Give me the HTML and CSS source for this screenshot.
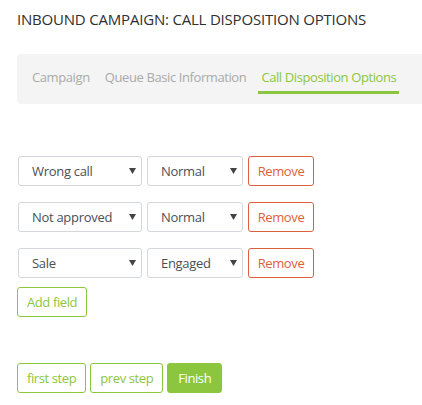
FILE: index.html
```html
<!DOCTYPE html>
<html>
<head>
<meta charset="utf-8">
<link rel="stylesheet" href="styles.css">
</head>
<body>
<div class="page">
  <h1 class="title">INBOUND CAMPAIGN: CALL DISPOSITION OPTIONS</h1>
  <div class="tabs">
    <a class="tab">Campaign</a>
    <a class="tab">Queue Basic Information</a>
    <a class="tab active">Call Disposition Options</a>
  </div>
  <div class="fields">
    <div class="row">
      <div class="select sel-a"><span>Wrong call</span><svg class="caret" width="7" height="6" viewBox="0 0 7 6"><path d="M0 0H7L3.5 6Z"/></svg></div>
      <div class="select sel-b"><span>Normal</span><svg class="caret" width="7" height="6" viewBox="0 0 7 6"><path d="M0 0H7L3.5 6Z"/></svg></div>
      <button class="btn btn-danger">Remove</button>
    </div>
    <div class="row">
      <div class="select sel-a"><span>Not approved</span><svg class="caret" width="7" height="6" viewBox="0 0 7 6"><path d="M0 0H7L3.5 6Z"/></svg></div>
      <div class="select sel-b"><span>Normal</span><svg class="caret" width="7" height="6" viewBox="0 0 7 6"><path d="M0 0H7L3.5 6Z"/></svg></div>
      <button class="btn btn-danger">Remove</button>
    </div>
    <div class="row">
      <div class="select sel-a"><span>Sale</span><svg class="caret" width="7" height="6" viewBox="0 0 7 6"><path d="M0 0H7L3.5 6Z"/></svg></div>
      <div class="select sel-b"><span>Engaged</span><svg class="caret" width="7" height="6" viewBox="0 0 7 6"><path d="M0 0H7L3.5 6Z"/></svg></div>
      <button class="btn btn-danger">Remove</button>
    </div>
    <div class="add-row">
      <button class="btn btn-outline">Add field</button>
    </div>
  </div>
  <div class="steps">
    <button class="btn btn-outline">first step</button>
    <button class="btn btn-outline">prev step</button>
    <button class="btn btn-primary">Finish</button>
  </div>
</div>
</body>
</html>
```
FILE: styles.css
```css
* { box-sizing: border-box; }
html, body { margin: 0; padding: 0; background: #fff; }
body {
  font-family: "Open Sans", "Noto Sans", sans-serif;
  color: #444;
  overflow: hidden;
}
.page {
  padding: 8px 0 0 17px;
  width: 430px;
}
.title {
  margin: 0;
  font-size: 15px;
  font-weight: 400;
  color: #2f2f2f;
  line-height: 22px;
  letter-spacing: -0.2px;
}
.tabs {
  margin-top: 24px;
  height: 50px;
  background: #f4f4f4;
  border-radius: 4px 0 0 4px;
  display: flex;
  align-items: flex-start;
  padding-left: 12px;
  gap: 9px;
}
.tab {
  font-size: 13px;
  color: #aaa;
  padding: 8px 3px 0;
  display: flex;
  align-items: center;
  height: 40px;
  letter-spacing: -0.4px;
  border-bottom: 3px solid transparent;
}
.tab.active {
  color: #8cc63e;
  border-bottom-color: #8cc63e;
}
.fields {
  margin-top: 52px;
  display: flex;
  flex-direction: column;
  gap: 16px;
}
.row {
  display: flex;
  gap: 5px;
  padding-left: 1px;
}
.select {
  height: 30px;
  border: 1px solid #d3d6da;
  border-radius: 3px;
  display: flex;
  align-items: center;
  justify-content: space-between;
  padding: 0 5px 0 13px;
  font-size: 13px;
  color: #4a4f57;
  background: #fff;
  letter-spacing: -0.3px;
}
.sel-a { width: 124px; }
.sel-b { width: 96px; }
.caret { fill: #444; }
.btn {
  font-family: inherit;
  font-size: 13px;
  height: 30px;
  padding: 0 9px;
  border-radius: 3px;
  background: #fff;
  cursor: pointer;
  line-height: 28px;
  letter-spacing: -0.4px;
}
.btn-danger {
  border: 1px solid #de5f3c;
  color: #de5f3c;
  width: 66px;
  padding: 0;
}
.btn-outline {
  border: 1px solid #8cc63e;
  color: #8cc63e;
}
.btn-primary {
  border: 1px solid #8cc63e;
  background: #8cc63e;
  color: #fff;
  padding: 0 10px;
}
.add-row {
  margin-top: -7px;
  display: flex;
}
.steps {
  margin-top: 46px;
  display: flex;
  gap: 4px;
}
```
